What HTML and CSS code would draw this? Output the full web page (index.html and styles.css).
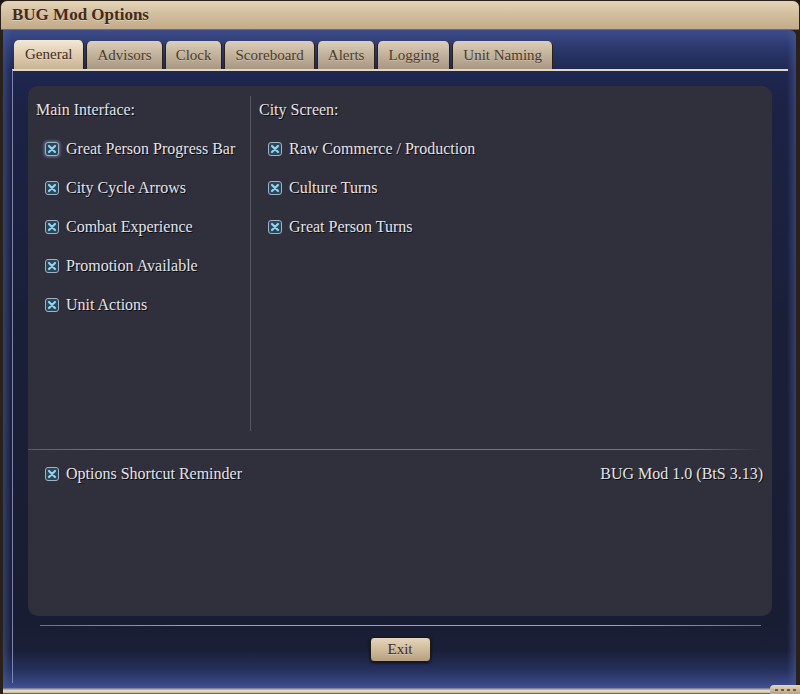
FILE: index.html
```html
<!DOCTYPE html>
<html>
<head>
<meta charset="utf-8">
<link rel="stylesheet" href="styles.css">
</head>
<body>
<div class="window">
  <div class="titlebar"><span class="title">BUG Mod Options</span></div>
  <div class="frame">
    <div class="tabs">
      <div class="tab active">General</div>
      <div class="tab">Advisors</div>
      <div class="tab">Clock</div>
      <div class="tab">Scoreboard</div>
      <div class="tab">Alerts</div>
      <div class="tab">Logging</div>
      <div class="tab">Unit Naming</div>
    </div>
    <div class="tabbody">
      <div class="panel">
        <div class="cols">
          <div class="col col-left">
            <div class="heading">Main Interface:</div>
            <div class="opt"><span class="cb focus"><svg viewBox="0 0 10 10"><path d="M2 2 L8 8 M8 2 L2 8"/></svg></span>Great Person Progress Bar</div>
            <div class="opt"><span class="cb"><svg viewBox="0 0 10 10"><path d="M2 2 L8 8 M8 2 L2 8"/></svg></span>City Cycle Arrows</div>
            <div class="opt"><span class="cb"><svg viewBox="0 0 10 10"><path d="M2 2 L8 8 M8 2 L2 8"/></svg></span>Combat Experience</div>
            <div class="opt"><span class="cb"><svg viewBox="0 0 10 10"><path d="M2 2 L8 8 M8 2 L2 8"/></svg></span>Promotion Available</div>
            <div class="opt"><span class="cb"><svg viewBox="0 0 10 10"><path d="M2 2 L8 8 M8 2 L2 8"/></svg></span>Unit Actions</div>
          </div>
          <div class="col col-right">
            <div class="heading">City Screen:</div>
            <div class="opt"><span class="cb"><svg viewBox="0 0 10 10"><path d="M2 2 L8 8 M8 2 L2 8"/></svg></span>Raw Commerce / Production</div>
            <div class="opt"><span class="cb"><svg viewBox="0 0 10 10"><path d="M2 2 L8 8 M8 2 L2 8"/></svg></span>Culture Turns</div>
            <div class="opt"><span class="cb"><svg viewBox="0 0 10 10"><path d="M2 2 L8 8 M8 2 L2 8"/></svg></span>Great Person Turns</div>
          </div>
        </div>
        <div class="sep"></div>
        <div class="footer-row">
          <div class="opt"><span class="cb"><svg viewBox="0 0 10 10"><path d="M2 2 L8 8 M8 2 L2 8"/></svg></span>Options Shortcut Reminder</div>
          <div class="version">BUG Mod 1.0 (BtS 3.13)</div>
        </div>
      </div>
      <div class="rule"></div>
      <div class="actions"><div class="exit">Exit</div></div>
    </div>
  </div>
  <div class="bottombar"><span class="grip"><i></i><i></i><i></i><i></i></span></div>
</div>
</body>
</html>
```
FILE: styles.css
```css
* { box-sizing: border-box; }
html, body { margin: 0; padding: 0; background: #1b1712; }
body { font-family: "Liberation Serif", "Times New Roman", serif; }

.window {
  width: 800px;
  height: 694px;
  display: flex;
  flex-direction: column;
  background: #2a2219;
  border-radius: 7px 7px 0 0;
  overflow: hidden;
}

.titlebar {
  height: 29px;
  flex: none;
  margin: 1px 1px 0 1px;
  border-radius: 6px 6px 0 0;
  background: linear-gradient(to bottom, #e4d4b8 0%, #d3bf9e 45%, #c2ab88 100%);
  padding-left: 11px;
  display: flex;
  align-items: center;
  border-bottom: 1px solid #7c6a52;
}
.title {
  font-weight: bold;
  font-size: 17px;
  color: #45291a;
  text-shadow: 0 1px 0 rgba(255,255,255,0.35);
}

.frame {
  flex: 1;
  margin: 0 4px 0 3px;
  display: flex;
  flex-direction: column;
  padding: 10px 8px 0 9px;
  border-radius: 0 6px 0 0;
  background:
    linear-gradient(to right, rgba(70,90,160,0.55) 0px, rgba(40,52,100,0) 9px, rgba(40,52,100,0) calc(100% - 9px), rgba(70,90,160,0.55) 100%),
    linear-gradient(to bottom, #3d4d8b 0px, #2b386c 18px, #1e2750 42px, #1c2244 80px, #1a1f38 300px, #191d33 590px, #1a1f37 620px, #25305c 640px, #3a4a88 655px, #4a5a98 660px);
}

.tabs {
  display: flex;
  gap: 2px;
  height: 29px;
  padding-left: 2px;
  align-items: flex-end;
}
.tab {
  height: 28px;
  padding: 0 10px;
  font-size: 15px;
  color: #4b3a2a;
  display: flex;
  align-items: center;
  border-radius: 5px 5px 0 0;
  background: linear-gradient(to bottom, #dccfba 0%, #c7b79f 40%, #a89782 100%);
  border-left: 1px solid #2a2016;
  border-right: 1px solid #2a2016;
  text-shadow: 0 1px 0 rgba(255,255,255,0.25);
}
.tab.active {
  height: 29px;
  padding: 0 11px;
  background: linear-gradient(to bottom, #f4e9d6 0%, #e4d2b6 40%, #c9b395 100%);
  color: #3e2c1e;
  border-left: none;
}

.tabbody {
  flex: 1;
  display: flex;
  flex-direction: column;
  border-top: 2px solid #e2d8c6;
  border-left: 1px solid #7f86a8;
  margin-bottom: 5px;
}

.panel {
  margin: 15px 16px 0 15px;
  height: 530px;
  flex: none;
  background: #30303d;
  border-radius: 10px;
  padding: 10px 9px 0 8px;
  color: #e4e4e6;
  font-size: 16px;
  text-shadow: 1px 1px 0 rgba(0,0,0,0.85);
  display: flex;
  flex-direction: column;
}

.cols {
  display: flex;
  height: 335px;
}
.col {
  display: flex;
  flex-direction: column;
  gap: 19px;
  padding-top: 4px;
}
.col-left {
  width: 215px;
  border-right: 1px solid #545563;
}
.col-right {
  padding-left: 8px;
}

.heading {
  line-height: 20px;
  height: 20px;
}
.opt {
  display: flex;
  align-items: center;
  height: 20px;
  line-height: 20px;
  padding-left: 9px;
  gap: 7px;
  white-space: nowrap;
}

.cb {
  width: 14px;
  height: 14px;
  flex: none;
  border-radius: 3px;
  border: 1px solid #9fb3c6;
  background: #2c4658;
  display: flex;
  align-items: center;
  justify-content: center;
}
.cb.focus {
  box-shadow: 0 0 3px 1px rgba(150,180,230,0.55);
}
.cb svg {
  width: 10px;
  height: 10px;
}
.cb svg path {
  stroke: #8fd4f2;
  stroke-width: 2.2;
  stroke-linecap: round;
  fill: none;
}

.sep {
  height: 1px;
  margin: 18px 3px 0 -8px;
  background: linear-gradient(to right, rgba(120,120,135,0.6), #75757f 10%, #75757f 90%, rgba(120,120,135,0));
}

.footer-row {
  display: flex;
  justify-content: space-between;
  margin-top: 14px;
}
.version {
  line-height: 20px;
  white-space: nowrap;
}

.rule {
  height: 1px;
  margin: 9px 27px 0 27px;
  background: linear-gradient(to right, #6b7090, #9a9eb6 20%, #9a9eb6 80%, #6b7090);
}

.actions {
  display: flex;
  justify-content: center;
  margin-top: 11px;
  padding-right: 1px;
}
.exit {
  width: 61px;
  height: 25px;
  border-radius: 4px;
  background: linear-gradient(to bottom, #e6d6bc 0%, #d0bb9a 50%, #b59f80 100%);
  border: 1px solid #1c1812;
  box-shadow: 0 1px 3px rgba(0,0,0,0.7);
  color: #3e2c1e;
  font-size: 15px;
  display: flex;
  align-items: center;
  justify-content: center;
  text-shadow: 0 1px 0 rgba(255,255,255,0.3);
}

.bottombar {
  height: 6px;
  flex: none;
  margin: 0 4px 0 3px;
  background: linear-gradient(to bottom, #5a6aa0 0px, #d8c8aa 2px, #efe4d0 3px, #c4b292 5px, #2a2219 6px);
  position: relative;
}
.grip {
  position: absolute;
  right: -4px;
  bottom: 0;
  width: 30px;
  height: 9px;
  background: linear-gradient(to bottom, #e6d6bc, #b8a282);
  border-radius: 4px 0 0 0;
  display: flex;
  gap: 3px;
  align-items: center;
  justify-content: center;
  padding-top: 1px;
}
.grip i {
  width: 3px;
  height: 2px;
  background: #6a5a46;
}
```
